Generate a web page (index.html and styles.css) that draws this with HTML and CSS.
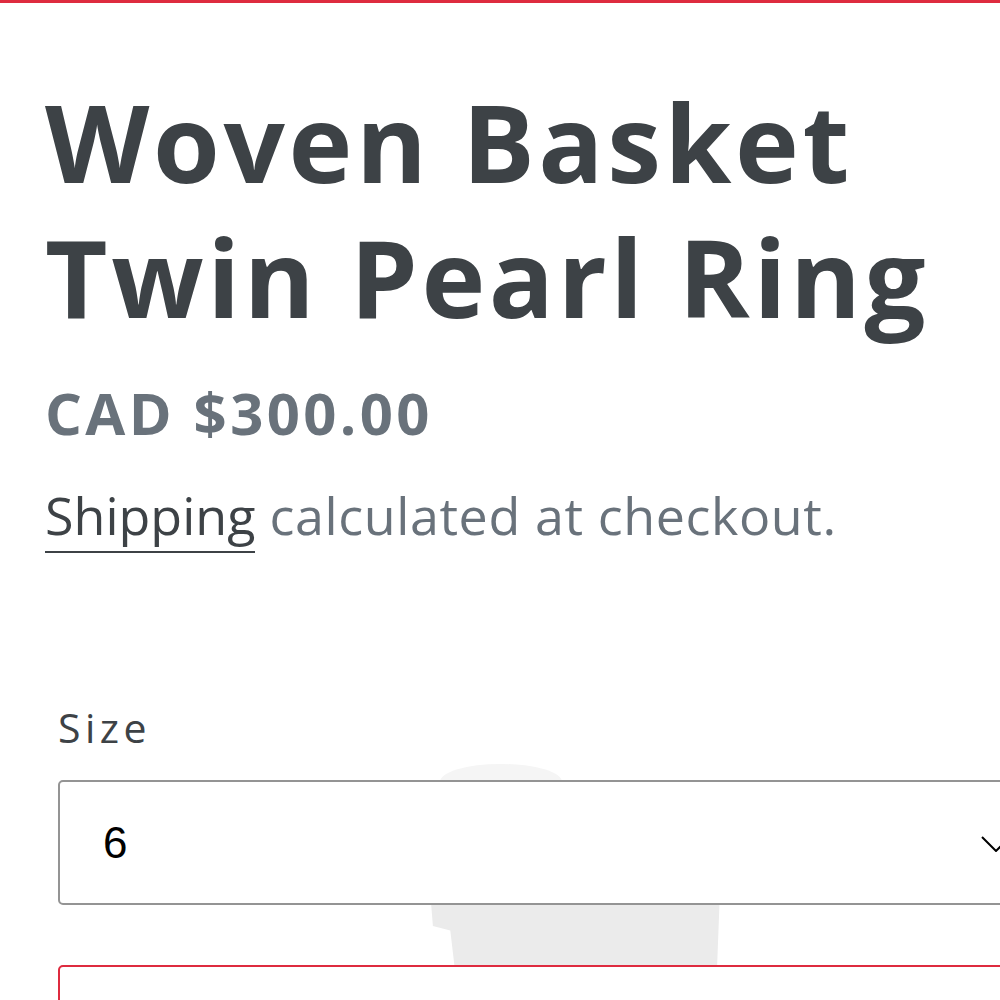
FILE: index.html
```html
<!DOCTYPE html>
<html lang="en">
<head>
    <meta charset="UTF-8">
    <meta name="viewport" content="width=device-width, initial-scale=1.0">
    <title>Woven Basket Twin Pearl Ring</title>
    <link rel="stylesheet" href="styles.css">
</head>
<body>
    <div class="announcement-bar"></div>

    <!-- soft shadow of the product photo sitting behind the form -->
    <div class="photo-shadow photo-shadow-top"></div>
    <div class="photo-shadow photo-shadow-bottom"></div>

    <main class="product-single">
        <h1 class="product-title">Woven Basket Twin Pearl Ring</h1>
        <p class="product-price">CAD $300.00</p>
        <p class="product-policies"><a href="#" class="policy-link">Shipping</a> calculated at checkout.</p>

        <form class="product-form">
            <label for="size-select" class="form-label">Size</label>
            <div class="select-wrapper">
                <select id="size-select" class="product-select">
                    <option>5</option>
                    <option selected>6</option>
                    <option>7</option>
                    <option>8</option>
                </select>
                <svg class="select-chevron" viewBox="0 0 30 16" aria-hidden="true">
                    <path d="M1 1 L15 15 L29 1" fill="none" stroke="#000" stroke-width="2"/>
                </svg>
            </div>
            <button type="submit" class="add-to-cart" aria-label="Add to cart"></button>
        </form>
    </main>
</body>
</html>
```

FILE: styles.css
```css
:root {
    --text-color: #3d4246;
    --muted-color: #69727b;
    --accent-color: #de2b3f;
    --border-color: #949494;
}

html {
    overflow: hidden;
}

body {
    margin: 0;
    background: #fff;
    font-family: 'Open Sans', sans-serif;
    color: var(--text-color);
    position: relative;
}

.announcement-bar {
    height: 3px;
    background-color: var(--accent-color);
}

.product-single {
    padding-left: 45px;
}

.product-title {
    margin: 71px 0 0;
    font-size: 108px;
    line-height: 135px;
    font-weight: 700;
    letter-spacing: 3.6px;
    width: 950px;
}

.product-price {
    margin: 36px 0 0;
    font-size: 58px;
    line-height: 66px;
    font-weight: 700;
    letter-spacing: 3.4px;
    color: var(--muted-color);
}

.product-policies {
    margin: 38px 0 0;
    font-size: 52px;
    line-height: 62px;
    letter-spacing: 0.6px;
    color: var(--muted-color);
}

.policy-link {
    color: var(--text-color);
    text-decoration: none;
    letter-spacing: 0;
    padding-bottom: 1px;
    border-bottom: 2px solid var(--text-color);
}

.product-form {
    padding-left: 13px;
    margin-top: 158px;
    width: 1000px;
}

.form-label {
    display: block;
    font-size: 41px;
    line-height: 47px;
    letter-spacing: 4.5px;
    color: var(--text-color);
}

.select-wrapper {
    position: relative;
    margin-top: 29px;
    z-index: 1;
}

.product-select {
    display: block;
    width: 100%;
    height: 125px;
    box-sizing: border-box;
    padding: 0 0 0 43px;
    border: 2px solid var(--border-color);
    border-radius: 5px;
    background: #fff;
    appearance: none;
    -webkit-appearance: none;
    font-family: 'Liberation Sans', Arial, sans-serif;
    font-size: 44px;
    color: #000;
}

.select-chevron {
    position: absolute;
    left: 923px;
    top: 56px;
    width: 30px;
    height: 16px;
}

.add-to-cart {
    position: relative;
    z-index: 1;
    display: block;
    width: 100%;
    height: 125px;
    margin-top: 60px;
    border: 2px solid var(--accent-color);
    border-radius: 5px;
    background: #fff;
}

.photo-shadow {
    position: absolute;
    z-index: 0;
}

.photo-shadow-top {
    left: 440px;
    top: 764px;
    width: 122px;
    height: 30px;
    border-radius: 60px 60px 0 0 / 18px 18px 0 0;
    background: #f5f5f5;
}

.photo-shadow-bottom {
    left: 430px;
    top: 890px;
    width: 290px;
    height: 90px;
    background: #ebebeb;
    clip-path: polygon(0 0, 100% 0, 99% 85%, 97% 100%, 9% 100%, 7% 45%, 1% 40%);
}
```
